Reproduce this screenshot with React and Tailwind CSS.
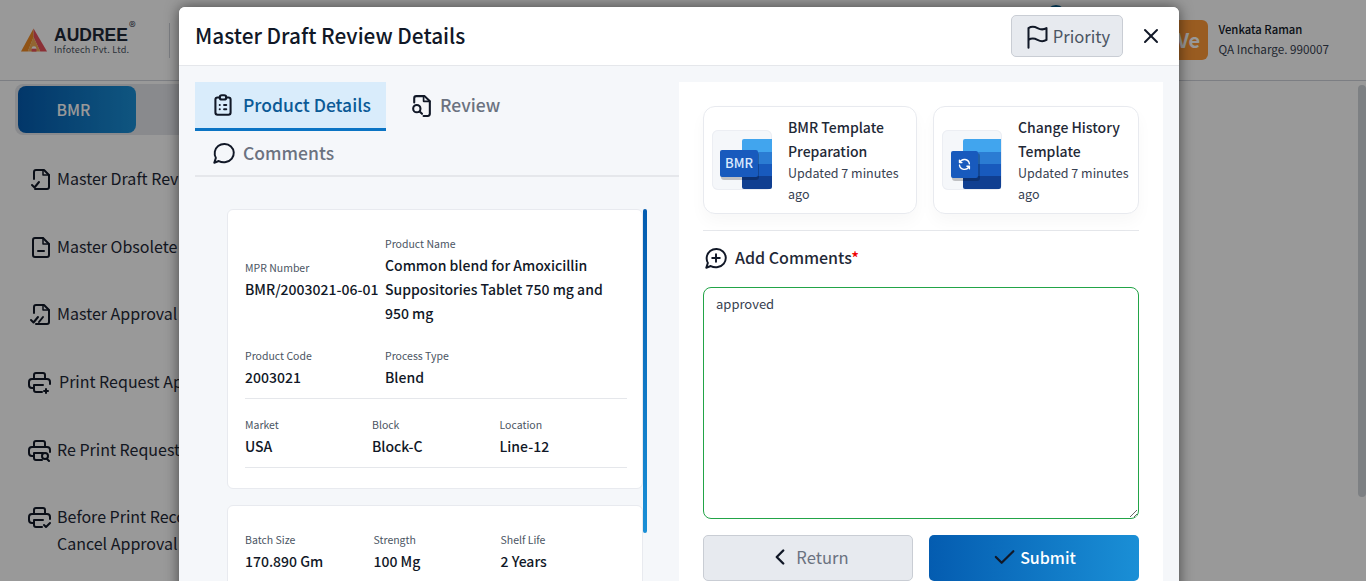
import React from "react";
import { TbClipboardList, TbX, TbChevronLeft, TbCheck } from "react-icons/tb";

const S = { fill: "none", stroke: "currentColor", strokeWidth: 2, strokeLinecap: "round", strokeLinejoin: "round" };

const FileBase = ({ children }) => (
  <svg viewBox="0 0 24 24" width="24" height="24" {...S} className="shrink-0 text-[#111827]">{children}</svg>
);
const IconDraft = () => (
  <FileBase>
    <path d="M5 12V5a2 2 0 0 1 2-2h8l5 5v12a2 2 0 0 1-2 2H6" />
    <path d="M14 3v5h6" strokeWidth="1.5" />
    <path d="M3 18l2.5 2.5L10 15" />
  </FileBase>
);
const IconObsolete = () => (
  <FileBase>
    <path d="M14 3H6a2 2 0 0 0-2 2v15a2 2 0 0 0 2 2h12a2 2 0 0 0 2-2V9z" />
    <path d="M14 3v6h6" strokeWidth="1.5" />
    <path d="M9 16h6" />
  </FileBase>
);
const IconApproval = () => (
  <FileBase>
    <path d="M5 11V5a2 2 0 0 1 2-2h8l5 5v12a2 2 0 0 1-2 2H7" />
    <path d="M14 3v5h6" strokeWidth="1.5" />
    <path d="M2 18l2.500 2.500L9 15M10 20l4-5" />
  </FileBase>
);
const Printer = ({ children }) => (
  <svg viewBox="0 0 26 24" width="26" height="24" {...S} className="-ml-[2px] shrink-0 text-[#111827]">
    <path d="M7 18H5a3 3 0 0 1-3-3v-3a3 3 0 0 1 3-3h15a3 3 0 0 1 3 3v2" />
    <path d="M7 9V5a2 2 0 0 1 2-2h7a2 2 0 0 1 2 2v4" />
    <path d="M7 15h9M7 15v5a2 2 0 0 0 2 2h6" />
    {children}
  </svg>
);

const Flag = () => (
  <svg viewBox="0 0 24 24" width="27" height="27" {...S} strokeWidth="1.800" className="text-[#111827]">
    <path d="M4 22V4.500c2.500-1.600 5-1.600 8 0s5.500 1.600 8 0V15c-2.500 1.600-5 1.600-8 0s-5.500-1.600-8 0" />
  </svg>
);

const IconReview = () => (
  <svg viewBox="0 0 24 24" width="25" height="25" {...S} className="shrink-0 text-[#111827]">
    <path d="M5 9V5a2 2 0 0 1 2-2h8l5 5v12a2 2 0 0 1-2 2h-4" />
    <path d="M14 3v5h6" strokeWidth="1.600" />
    <circle cx="7.500" cy="15" r="3.500" />
    <path d="M10.200 17.700L12.500 20" />
  </svg>
);

const Bubble = ({ children }) => (
  <svg viewBox="0 0 24 24" width="26" height="26" {...S} strokeWidth="1.800" className="shrink-0 text-[#111827]">
    <path d="M3 21l1.500-4.500C2.500 13 3.200 8.300 6.600 5.600c3.500-2.700 8.600-2.500 11.800.4 3.200 3 3.500 7.800.8 11.100-2.800 3.400-7.900 4.400-12 2.300z" />
    {children}
  </svg>
);

const WordIcon = ({ bmr }) => {
  const x = bmr ? 30 : 21;
  const w = bmr ? 30 : 38;
  return (
    <div className="h-[60px] w-[60px] shrink-0 rounded-md bg-[#f5f7fa] shadow-[inset_0_0_0_1px_#eceef3]">
      <svg viewBox="0 0 60 60" width="60" height="60">
        <path d={`M${x + 2} 9h${w - 2}v13H${x}V11a2 2 0 0 1 2-2z`} fill="#41a5ee" />
        <rect x={x} y="22" width={w} height="12" fill="#2b7cd3" />
        <rect x={x} y="34" width={w} height="12" fill="#185abd" />
        <path d={`M${x} 46h${w}v11a2 2 0 0 1-2 2H${x + 2}a2 2 0 0 1-2-2z`} fill="#103f91" />
        {bmr ? (
          <>
            <rect x="9" y="22" width="38" height="28" rx="3" fill="#000" opacity=".22" />
            <rect x="8" y="20" width="38" height="27" rx="2" fill="#185abd" />
            <text x="27" y="38" textAnchor="middle" fontSize="13" fontWeight="500" fill="#dbeafe" fontFamily="'Noto Sans CJK SC', sans-serif">BMR</text>
          </>
        ) : (
          <>
            <rect x="10" y="23" width="28" height="28" rx="3" fill="#000" opacity=".22" />
            <rect x="9" y="21" width="27" height="27" rx="2" fill="#185abd" />
            <g transform="translate(15 27) scale(.62)" fill="none" stroke="#fff" strokeWidth="2.200" strokeLinecap="round" strokeLinejoin="round">
              <path d="M20 11A8.100 8.100 0 0 0 4.500 9M4 5v4h4" />
              <path d="M4 13a8.100 8.100 0 0 0 15.500 2m.5 4v-4h-4" />
            </g>
          </>
        )}
      </svg>
    </div>
  );
};

const DocCard = ({ w, title, bmr }) => (
  <div className={`flex h-[108px] items-center gap-4 rounded-xl border border-[#e8eaef] bg-white pl-2 pr-2 shadow-[0_8px_16px_rgba(17,24,39,0.03)] ${w}`}>
    <WordIcon bmr={bmr} />
    <div className="min-w-0">
      <div className="text-[14px] font-medium leading-[24px] text-[#1f2937]">{title}</div>
      <div className="-mt-px mb-px text-[12.500px] leading-[21.500px] text-[#374151]">Updated 7 minutes ago</div>
    </div>
  </div>
);

const Field = ({ label, value, className = "" }) => (
  <div className={className}>
    <div className="text-[10.500px] leading-[18px] text-[#4b5563]">{label}</div>
    <div className="text-[14px] font-medium leading-[24px] text-[#111827]">{value}</div>
  </div>
);

const MenuItem = ({ icon, children, className = "" }) => (
  <div className={`flex items-start gap-[2px] whitespace-nowrap text-[16px] leading-[27px] text-[#1f2937] ${className}`}>
    <span className="flex h-[27px] w-[26px] shrink-0 items-center">{icon}</span>
    <span>{children}</span>
  </div>
);

export default function App() {
  return (
    <div className="relative h-[581px] w-[1366px] overflow-hidden bg-white font-['Noto_Sans_CJK_SC','Noto_Sans',sans-serif]">
      {/* page behind the dialog */}
      <header className="flex h-[81px] items-center justify-between border-b border-[#cfd3da] pl-[21px] pr-[37px]">
        <div className="flex items-center">
          <svg viewBox="0 0 28 24" width="27" height="24" className="shrink-0">
            <path d="M13 0 L0 24 H7 L13 9z" fill="#f08a24" />
            <path d="M13 0 L27 24 H20 L13 9z" fill="#e8505b" />
            <path d="M7 24 L13 9 L20 24z" fill="#f3a040" opacity=".9" />
            <circle cx="13.500" cy="21" r="2.500" fill="#fff" />
            <rect x="11" y="21" width="5" height="3" fill="#e8505b" />
          </svg>
          <div className="relative ml-[6px] mt-[1px] w-[80px]">
            <div className="font-['Liberation_Sans',sans-serif] text-[17.500px] font-bold leading-[17px] text-[#1f2937]">AUDREE</div>
            <div className="text-[9.100px] leading-[11px] tracking-[0.2px] text-[#4b5563]">Infotech Pvt. Ltd.</div>
            <span className="absolute left-[75px] top-[-8px] text-[14px] leading-none text-[#374151]">®</span>
          </div>
          <div className="ml-[35px] h-[35px] w-px bg-[#cfd3da]" />
        </div>
        <div className="flex items-center gap-[10px]">
          <div className="flex h-[40px] w-[40px] items-center justify-center rounded-md bg-[#ff9a38] text-[20px] font-bold text-white">Ve</div>
          <div className="mb-[2px]">
            <div className="text-[11.300px] font-medium leading-[20px] text-[#111827]">Venkata Raman</div>
            <div className="text-[11.700px] leading-[20px] text-[#374151]">QA Incharge. 990007</div>
          </div>
        </div>
      </header>

      <aside className="pl-[15px] pt-[3px]">
        <div className="w-[180px] rounded-l-lg bg-[#e5e7eb] py-[2px] pl-[3px]">
          <div className="flex h-[47px] w-[118px] items-center justify-center rounded-lg pr-[7px] text-[15.750px] font-medium text-white [background-image:linear-gradient(to_right,#045cb0,#1a8fd6)]">BMR</div>
        </div>
        <div className="ml-[14px] mt-[30px] flex flex-col">
          <MenuItem icon={<IconDraft />}>Master Draft Review</MenuItem>
          <MenuItem className="mt-[41px]" icon={<IconObsolete />}>Master Obsolete</MenuItem>
          <MenuItem className="mt-[40px]" icon={<IconApproval />}>Master Approval</MenuItem>
          <MenuItem className="mt-[41px] [&>span:last-child]:ml-[2px]" icon={<Printer><path d="M19 19v4M17 21h4" /></Printer>}>Print Request Approval</MenuItem>
          <MenuItem className="mt-[41px]" icon={<Printer><circle cx="18" cy="18" r="3" /><path d="M20 21l2 2" /></Printer>}>Re Print Request</MenuItem>
          <MenuItem className="mt-[40px]" icon={<Printer><path d="M17 20l2 2 4-4" /></Printer>}>
            Before Print Record<br />Cancel Approval
          </MenuItem>
        </div>
      </aside>

      <div className="absolute right-0 top-[85px] h-[412px] w-[8px] rounded bg-[#d1d5db]" />
      <div className="absolute left-[1046px] top-[5px] h-[20px] w-[20px] rounded-full bg-[#0369a1]" />

      {/* overlay */}
      <div className="absolute inset-0 bg-black/40" />

      {/* dialog */}
      <div className="absolute left-[179px] top-[7px] h-[600px] w-[1000px] overflow-hidden rounded-t-md bg-[#f5f7fa] shadow-[0_0_14px_rgba(0,0,0,0.55)]">
        <div className="flex h-[59px] items-center justify-between border-b border-[#e5e7eb] bg-white pl-[16px] pr-[16px]">
          <h1 className="mb-[2px] text-[20.800px] font-medium leading-[36px] text-[#111827]">Master Draft Review Details</h1>
          <div className="flex items-center gap-[16px]">
            <button className="flex h-[42px] w-[112px] items-center justify-center gap-[2px] rounded-[5px] border border-[#c9cdd4] bg-[#e7eaef] text-[16.600px] text-[#4b5563]">
              <Flag />
              Priority
            </button>
            <TbX size={24} strokeWidth={2} className="text-[#111827]" />
          </div>
        </div>

        <div className="flex items-start pl-[16px] pt-[16px]">
          {/* left column */}
          <div className="w-[484px] shrink-0">
            <div className="flex flex-wrap border-b-2 border-[#e5e7eb]">
              <div className="flex h-[49px] w-[191px] items-center gap-[7px] whitespace-nowrap border-b-[3px] border-[#0b74c4] bg-[#d9ecfb] pl-[15px] text-[17.500px] font-medium text-[#0b5a96]">
                <TbClipboardList size={26} strokeWidth={1.900} className="text-[#111827]" />
                Product Details
              </div>
              <div className="flex h-[49px] w-[140px] items-center gap-[6px] pb-[2px] pl-[23px] text-[17.500px] font-medium text-[#6b7280]">
                <IconReview />
                <span>Review</span>
              </div>
              <div className="flex h-[44px] basis-full items-center gap-[6px] pl-[16px] text-[17.500px] font-medium text-[#6b7280]">
                <Bubble />
                Comments
              </div>
            </div>

            <div className="relative ml-[32px] mt-[32px] w-[416px]">
              <div className="absolute right-[-4px] top-0 h-[324px] w-[4px] rounded-full [background-image:linear-gradient(to_bottom,#045cb0,#1a8fd6)]" />
              <div className="h-[280px] rounded-md border border-[#e8eaef] bg-white pl-[17px] pr-[15px]">
                <div className="flex items-center pt-[25px]">
                  <Field label="MPR Number" value="BMR/2003021-06-01" className="w-[140px] shrink-0 whitespace-nowrap" />
                  <Field label="Product Name" value="Common blend for Amoxicillin Suppositories Tablet 750 mg and 950 mg" className="w-[225px]" />
                </div>
                <div className="mt-[22px] flex border-b border-[#e5e7eb] pb-[9px]">
                  <Field label="Product Code" value="2003021" className="w-[140px]" />
                  <Field label="Process Type" value="Blend" />
                </div>
                <div className="flex border-b border-[#e5e7eb] pb-[9px] pt-[17px]">
                  <Field label="Market" value="USA" className="w-[127px]" />
                  <Field label="Block" value="Block-C" className="w-[127.500px]" />
                  <Field label="Location" value="Line-12" />
                </div>
              </div>
              <div className="mt-[16px] h-[200px] rounded-md border border-[#e8eaef] bg-white px-[17px] pt-[25px]">
                <div className="flex">
                  <Field label="Batch Size" value="170.890 Gm" className="w-[128.500px]" />
                  <Field label="Strength" value="100 Mg" className="w-[127px]" />
                  <Field label="Shelf Life" value="2 Years" />
                </div>
              </div>
            </div>
          </div>

          {/* right column */}
          <div className="h-[520px] w-[484px] shrink-0 bg-white px-[24px] pt-[24px]">
            <div className="flex gap-[16px]">
              <DocCard w="w-[214px]" bmr title="BMR Template Preparation" />
              <DocCard w="w-[206px]" title="Change History Template" />
            </div>
            <div className="mt-[16px] border-t border-[#e5e7eb]" />
            <div className="mt-[15px] flex h-[24px] items-center gap-[6px] text-[16px] font-medium text-[#1f2937]">
              <Bubble><path d="M8.500 12h7M12 8.500v7" /></Bubble>
              <span className="mb-[2px]">Add Comments<span className="text-[#ef0000]">*</span></span>
            </div>
            <textarea
              readOnly
              defaultValue="approved"
              className="mt-[17px] block h-[232px] w-full rounded-lg border border-[#22a447] px-[12px] py-[6px] text-[13px] leading-[20px] text-[#374151] outline-none"
            />
            <div className="mt-[16px] flex gap-[16px]">
              <button className="flex h-[46px] w-[210px] items-center justify-center gap-[3px] rounded-[5px] border border-[#c9cdd4] bg-[#e7eaef] pb-[2px] text-[16.600px] text-[#6b7280]">
                <TbChevronLeft size={26} strokeWidth={2.200} className="text-[#111827]" />
                Return
              </button>
              <button className="flex h-[46px] w-[210px] items-center justify-center gap-[2px] rounded-[5px] pb-[2px] pr-[2px] text-[16px] font-medium text-white [background-image:linear-gradient(to_right,#045cb0,#1a8fd6)]">
                <TbCheck size={28} strokeWidth={1.900} className="text-[#111827]" />
                Submit
              </button>
            </div>
          </div>
        </div>
      </div>
    </div>
  );
}
